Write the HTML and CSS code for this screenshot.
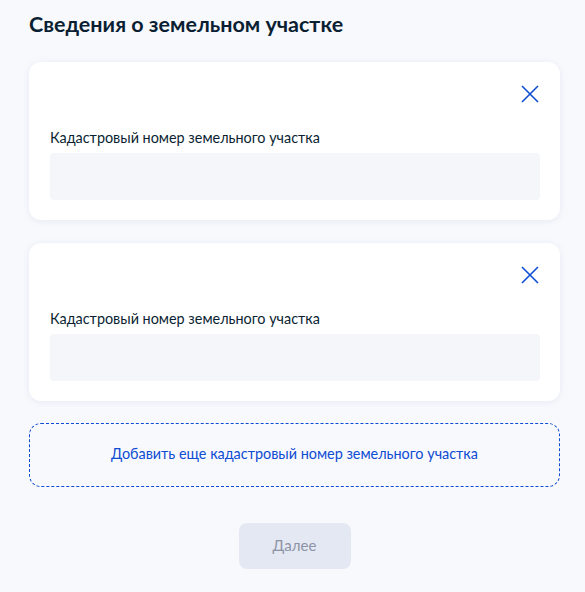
FILE: index.html
```html
<!DOCTYPE html>
<html lang="ru">

<head>
    <meta charset="utf-8">
    <meta name="viewport" content="width=device-width, initial-scale=1.0">
    <title>Сведения о земельном участке</title>
    <link rel="stylesheet" href="styles.css">
</head>

<body>
    <main class="page">
        <h1>Сведения о земельном участке</h1>

        <section class="card">
            <div class="card-top">
                <button class="remove" aria-label="Удалить">
                    <svg width="18" height="18" viewBox="0 0 18 18">
                        <path d="M1 1 L17 17 M17 1 L1 17" stroke="#0d4cd3" stroke-width="1.6" fill="none" />
                    </svg>
                </button>
            </div>
            <label class="label">Кадастровый номер земельного участка</label>
            <div class="field"></div>
        </section>

        <section class="card">
            <div class="card-top">
                <button class="remove" aria-label="Удалить">
                    <svg width="18" height="18" viewBox="0 0 18 18">
                        <path d="M1 1 L17 17 M17 1 L1 17" stroke="#0d4cd3" stroke-width="1.6" fill="none" />
                    </svg>
                </button>
            </div>
            <label class="label">Кадастровый номер земельного участка</label>
            <div class="field"></div>
        </section>

        <button class="add">Добавить еще кадастровый номер земельного участка</button>

        <div class="actions">
            <button class="next" disabled>Далее</button>
        </div>
    </main>
</body>

</html>
```

FILE: styles.css
```css
* {
    box-sizing: border-box;
}

body {
    margin: 0;
    background: #f8f9fd;
    font-family: Lato, "Liberation Sans", sans-serif;
    color: #0b1f33;
}

.page {
    width: 531px;
    margin-left: 29px;
    padding-top: 9px;
}

h1 {
    margin: 0 0 23px;
    font-size: 21.5px;
    line-height: 30px;
    font-weight: 700;
}

.card {
    background: #fff;
    border-radius: 12px;
    box-shadow: 0 1px 6px rgba(180, 190, 215, 0.25);
    padding: 22px 20px 20px 21px;
    margin-bottom: 23px;
}

.card:last-of-type {
    margin-bottom: 22px;
}

.card-top {
    display: flex;
    justify-content: flex-end;
    height: 20px;
}

.remove {
    border: 0;
    background: none;
    padding: 0;
    width: 20px;
    height: 20px;
    display: flex;
    align-items: center;
    justify-content: center;
    cursor: pointer;
}

.label {
    display: block;
    margin-top: 24px;
    font-size: 14.4px;
    line-height: 20px;
}

.field {
    margin-top: 5px;
    height: 47px;
    background: #f5f6f9;
    border-radius: 4px;
}

.add {
    display: block;
    width: 100%;
    height: 64px;
    padding: 0 0 3px;
    border: 1px dashed #0d4cd3;
    border-radius: 12px;
    background: transparent;
    color: #0d4cd3;
    font-family: inherit;
    font-size: 14.4px;
    cursor: pointer;
}

.actions {
    display: flex;
    justify-content: center;
    padding-top: 36px;
}

.next {
    width: 112px;
    height: 46px;
    padding: 0 0 3px;
    border: 0;
    border-radius: 8px;
    background: #e4e8f2;
    color: #8d93a6;
    font-family: inherit;
    font-size: 15px;
}
```
